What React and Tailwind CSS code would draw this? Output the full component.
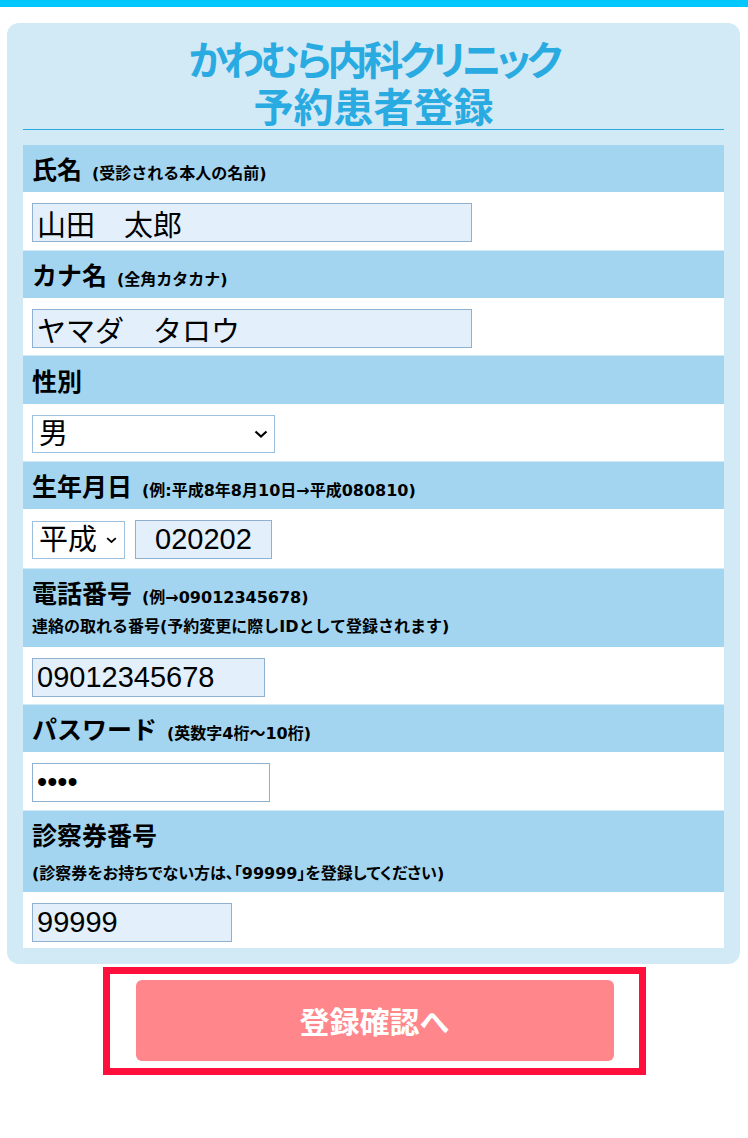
import React from "react";

const CJK = '"Noto Sans CJK JP", sans-serif';
const LABEL = '"DejaVu Sans", "Noto Sans CJK JP", sans-serif';
const INPUT = '"Liberation Sans", "Noto Sans CJK JP", sans-serif';

function Chevron({ w = 14, h = 8 }) {
  return (
    <svg width={w} height={h} viewBox="0 0 14 8" className="pointer-events-none">
      <path d="M1.5 1.5 L7 6.5 L12.5 1.5" fill="none" stroke="#000" strokeWidth="2.2" />
    </svg>
  );
}

function Header({ label, note, sub, subGap = "mt-[6px]", height = "h-[47px]", palt }) {
  return (
    <div
      className={`bg-[#a3d5f0] px-[9px] ${height} ${sub ? "pt-[10px]" : "flex items-center"}`}
      style={{ fontFamily: LABEL }}
    >
      <div className="flex h-[27px] items-baseline gap-[10px] leading-[27px] text-black">
        <span className="text-[25px] font-bold" style={{ fontFamily: CJK }}>{label}</span>
        {note && <span className="text-[16px] font-bold">{note}</span>}
      </div>
      {sub && (
        <div
          className={`${subGap} h-[29px] text-[16px] font-bold leading-[29px] text-black whitespace-nowrap`}
          style={palt ? { fontFeatureSettings: '"palt"' } : undefined}
        >
          {sub}
        </div>
      )}
    </div>
  );
}

function Row({ children, pb = "pb-[8px]" }) {
  return <div className={`flex items-center gap-[10px] bg-white px-[9px] pt-[11px] ${pb}`}>{children}</div>;
}

function TextBox({ value, w, center, type = "text", white }) {
  return (
    <input
      type={type}
      defaultValue={value}
      readOnly
      className={`h-[39px] border border-[#8fb1cf] px-[4px] text-[29px] leading-[37px] text-black outline-none ${white ? "bg-white" : "bg-[#e3f0fc]"} ${center ? "text-center" : ""}`}
      style={{ width: w, fontFamily: INPUT }}
    />
  );
}

function SelectBox({ value, w, small }) {
  return (
    <div
      className="relative flex h-[38px] items-center border border-[#9cc0de] bg-white pl-[6px] text-[29px] leading-[36px] text-black"
      style={{ width: w, fontFamily: INPUT }}
    >
      <span>{value}</span>
      <div className={`absolute top-1/2 -translate-y-1/2 ${small ? "right-[7px]" : "right-[6px]"}`}>
        {small ? <Chevron w={11} h={7} /> : <Chevron w={14} h={8} />}
      </div>
    </div>
  );
}

export default function App() {
  return (
    <div className="min-h-[1138px] w-[748px] bg-white">
      <div className="h-[7px] bg-[#00c8ff]" />
      <div className="ml-[7px] mr-[8px] mt-[16px] rounded-[12px] bg-[#d2e9f6] px-[16px] pt-[12px] pb-[16px]">
        <h1
          className="text-center text-[40px] font-bold text-[#29abe2]"
          style={{ fontFamily: CJK, fontFeatureSettings: '"palt"' }}
        >
          <div className="h-[47px] leading-[47px] tracking-[-4px]">かわむら内科クリニック</div>
          <div className="h-[47px] leading-[47px]">予約患者登録</div>
        </h1>
        <div className="h-px bg-[#29abe2]" />
        <div className="mt-[15px] flex flex-col gap-px">
          <div>
            <Header label="氏名" note="(受診される本人の名前)" />
            <Row><TextBox value="山田　太郎" w={440} /></Row>
          </div>
          <div>
            <Header label="カナ名" note="(全角カタカナ)" />
            <Row pb="pb-[7px]"><TextBox value="ヤマダ　タロウ" w={440} /></Row>
          </div>
          <div>
            <Header label="性別" height="h-[48px]" />
            <Row><SelectBox value="男" w={243} /></Row>
          </div>
          <div>
            <Header label="生年月日" note="(例:平成8年8月10日→平成080810)" />
            <Row pb="pb-[9px]">
              <SelectBox value="平成" w={93} small />
              <TextBox value="020202" w={137} center />
            </Row>
          </div>
          <div>
            <Header
              label="電話番号"
              note="(例→09012345678)"
              sub="連絡の取れる番号(予約変更に際しIDとして登録されます)"
              height="h-[78px]"
            />
            <Row pb="pb-[7px]"><TextBox value="09012345678" w={233} /></Row>
          </div>
          <div>
            <Header label="パスワード" note="(英数字4桁～10桁)" />
            <Row><TextBox value="1234" w={238} type="password" white /></Row>
          </div>
          <div>
            <Header
              label="診察券番号"
              sub="(診察券をお持ちでない方は、「99999」を登録してください)"
              subGap="mt-[11px]"
              height="h-[81px]"
              palt
            />
            <Row pb="pb-[6px]"><TextBox value="99999" w={200} /></Row>
          </div>
        </div>
      </div>
      <div className="mx-auto mt-[3px] w-[543px] border-[7px] border-[#ff0f3c] pt-[6px] pb-[7px] pl-[26px] pr-[25px]">
        <button
          className="flex h-[81px] w-full items-center justify-center rounded-[6px] bg-[#ff878c] text-[30px] font-bold text-white"
          style={{ fontFamily: CJK }}
        >
          登録確認へ
        </button>
      </div>
    </div>
  );
}
